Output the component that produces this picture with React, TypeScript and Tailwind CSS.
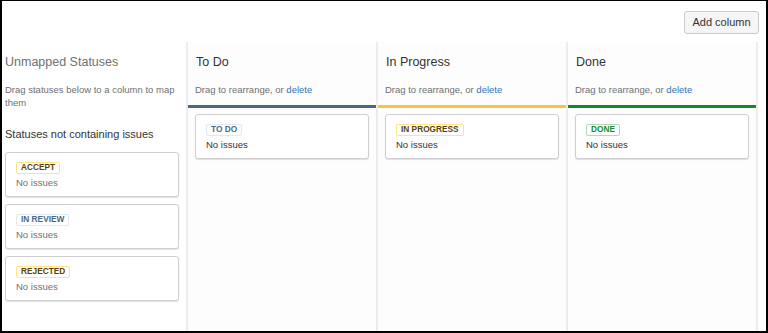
const FONT = "font-['Liberation_Sans',Arial,sans-serif]";

type Tone = "yellow" | "blue" | "green";

const LOZENGE: Record<Tone, string> = {
  yellow: "border-[#ffe28a] text-[#594300]",
  blue: "border-[#e4e8ed] text-[#4a6785]",
  green: "border-[#b2d8b9] text-[#14892c]",
};

const BAR: Record<Tone, string> = {
  yellow: "bg-[#f6c342]",
  blue: "bg-[#4a6785]",
  green: "bg-[#14892c]",
};

const COLUMNS: { title: string; status: string; tone: Tone }[] = [
  { title: "To Do", status: "TO DO", tone: "blue" },
  { title: "In Progress", status: "IN PROGRESS", tone: "yellow" },
  { title: "Done", status: "DONE", tone: "green" },
];

const UNMAPPED: { status: string; tone: Tone }[] = [
  { status: "ACCEPT", tone: "yellow" },
  { status: "IN REVIEW", tone: "blue" },
  { status: "REJECTED", tone: "yellow" },
];

function Lozenge({ label, tone }: { label: string; tone: Tone }) {
  return (
    <span
      className={`inline-flex h-[12px] items-center rounded-[2px] border bg-white px-[4px] text-[8.3px] font-bold leading-none ${LOZENGE[tone]}`}
    >
      {label}
    </span>
  );
}

function StatusCard({ label, tone, muted }: { label: string; tone: Tone; muted?: boolean }) {
  return (
    <div className="h-[45px] rounded-[3px] border border-[#cfcfcf] bg-white pl-[10px] pt-[9px] shadow-[0_1px_1px_rgba(0,0,0,0.12)]">
      <div className="flex">
        <Lozenge label={label} tone={tone} />
      </div>
      <p className={`mt-[3px] text-[9.5px] leading-[12px] ${muted ? "text-[#707070]" : "text-[#333]"}`}>
        No issues
      </p>
    </div>
  );
}

export default function App() {
  return (
    <div
      className={`${FONT} flex h-[333px] w-[768px] flex-col overflow-hidden border-t border-r-2 border-b-2 border-l-2 border-black bg-white`}
    >
      <div className="flex h-[41px] shrink-0 items-start justify-end pr-[7px] pt-[10px]">
        <button className="h-[23px] w-[75px] rounded-[3px] border border-[#cccccc] bg-[#f5f5f5] text-[11px] text-[#333]">
          Add column
        </button>
      </div>

      <div className="flex flex-1">
        <div className="w-[184px] shrink-0 pl-[3px] pr-[7px] pt-[12px]">
          <h2 className="text-[12.5px] leading-[16px] text-[#707070]">Unmapped Statuses</h2>
          <p className="mt-[12.5px] text-[9.5px] leading-[13px] text-[#707070]">
            Drag statuses below to a column to map them
          </p>
          <h3 className="mt-[18px] text-[11px] leading-[14px] text-[#333]">
            Statuses not containing issues
          </h3>
          <div className="mt-[11px] flex flex-col gap-[7px]">
            {UNMAPPED.map((s) => (
              <StatusCard key={s.status} label={s.status} tone={s.tone} muted />
            ))}
          </div>
        </div>

        {COLUMNS.map((c) => (
          <div key={c.title} className="w-[190px] shrink-0 border-l-2 border-[#ececec] bg-[#fdfdfd] pt-[12px]">
            <h2 className="pl-[8px] text-[12.5px] leading-[16px] text-[#333]">{c.title}</h2>
            <p className="mt-[12.5px] pl-[7px] text-[9.5px] leading-[13px] text-[#707070]">
              Drag to rearrange, or <span className="text-[#3572b0]">delete</span>
            </p>
            <div className={`mt-[9px] h-[3px] ${BAR[c.tone]}`} />
            <div className="mt-[6px] px-[7px]">
              <StatusCard label={c.status} tone={c.tone} />
            </div>
          </div>
        ))}

        <div className="flex-1 border-l-2 border-[#ececec]" />
      </div>
    </div>
  );
}
